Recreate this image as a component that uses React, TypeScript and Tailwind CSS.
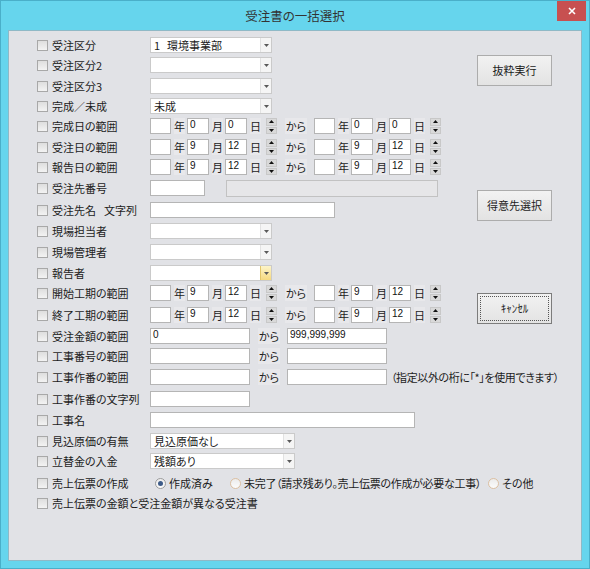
import React from "react";

const jp = "font-['Noto_Sans_CJK_JP','Noto_Sans',sans-serif] [font-feature-settings:'palt']";

function Check() {
  return (
    <span className="block w-[11px] h-[11px] shrink-0 border border-[#a8a8a8] bg-linear-to-b from-[#dedede] to-[#f3f3f3]" />
  );
}

type RowProps = { h: string; label: React.ReactNode; children?: React.ReactNode };

function Row({ h, label, children }: RowProps) {
  return (
    <div className={`flex items-start ${h}`}>
      <div className="flex items-center h-[16px] w-[113px] shrink-0">
        <Check />
        <span className="ml-[4px] whitespace-nowrap">{label}</span>
      </div>
      <div className="flex items-center h-[16px]">{children}</div>
    </div>
  );
}

function Box({ w, children, className = "" }: { w: string; children?: React.ReactNode; className?: string }) {
  return (
    <div
      className={`${w} h-[16px] shrink-0 bg-white border border-[#b5b5b5] pl-[2px] text-[10px] leading-[12px] font-['Liberation_Sans',sans-serif] text-[#111] ${className}`}
    >
      {children}
    </div>
  );
}

function Combo({ w, text, hot }: { w: string; text?: React.ReactNode; hot?: boolean }) {
  return (
    <div className={`${w} h-[16px] flex bg-white border border-[#cacaca]`}>
      <div className="flex-1 pl-[3px] leading-[14px] whitespace-nowrap overflow-hidden">{text}</div>
      <div
        className={`w-[11px] flex items-center justify-center border-l ${
          hot ? "border-[#e3c66a] bg-linear-to-b from-[#fdf4c8] to-[#f6d97f]" : "border-[#e2e2e2] bg-[#f5f5f5]"
        }`}
      >
        <svg width="5" height="3" viewBox="0 0 5 3">
          <path d="M0 0h5L2.5 3z" fill="#5a5a5a" />
        </svg>
      </div>
    </div>
  );
}

function Spin() {
  return (
    <div className="w-[11px] h-[16px] flex flex-col gap-px">
      <div className="flex-1 flex items-center justify-center bg-[#d9d9d9] border border-[#c8c8c8]">
        <svg width="5" height="3" viewBox="0 0 5 3">
          <path d="M0 3h5L2.5 0z" fill="#111" />
        </svg>
      </div>
      <div className="flex-1 flex items-center justify-center bg-[#d9d9d9] border border-[#c8c8c8]">
        <svg width="5" height="3" viewBox="0 0 5 3">
          <path d="M0 0h5L2.5 3z" fill="#111" />
        </svg>
      </div>
    </div>
  );
}

function Unit({ children }: { children: React.ReactNode }) {
  return (
    <span className="w-[12px] h-[16px] leading-[16px] text-center bg-[#e8e8eb] shrink-0">{children}</span>
  );
}

function Kara({ className = "" }: { className?: string }) {
  return (
    <span
      className={`w-[22px] h-[16px] leading-[16px] text-center whitespace-nowrap bg-[#e8e8eb] shrink-0 ${className}`}
    >
      から
    </span>
  );
}

function DateGroup({ m, d }: { m?: string; d?: string }) {
  return (
    <div className="flex items-center">
      <Box w="w-[21px]" />
      <span className="ml-[3px]">
        <Unit>年</Unit>
      </span>
      <Box w="w-[22px]" className="ml-[2px]">
        {m}
      </Box>
      <span className="ml-[3px]">
        <Unit>月</Unit>
      </span>
      <Box w="w-[22px]" className="ml-[2px]">
        {d}
      </Box>
      <span className="ml-[3px]">
        <Unit>日</Unit>
      </span>
      <div className="ml-[5px]">
        <Spin />
      </div>
    </div>
  );
}

function DateRange({ m, d }: { m: string; d: string }) {
  return (
    <div className="flex items-center">
      <DateGroup m={m} d={d} />
      <Kara className="ml-[8px]" />
      <div className="ml-[7px]">
        <DateGroup m={m} d={d} />
      </div>
    </div>
  );
}

function Radio({ on }: { on?: boolean }) {
  return (
    <span
      className={`w-[11px] h-[11px] shrink-0 rounded-full border flex items-center justify-center bg-linear-to-b from-[#ececec] to-[#fbfbfb] ${
        on ? "border-[#9c9c9c]" : "border-[#dcc0a2]"
      }`}
    >
      {on && <span className="w-[5px] h-[5px] rounded-full bg-[#3d5b88]" />}
    </span>
  );
}

function Btn({ children, focus }: { children: React.ReactNode; focus?: boolean }) {
  return (
    <div
      className={`w-[75px] h-[31px] flex items-center justify-center border bg-linear-to-b from-[#f2f2f2] to-[#e3e3e3] ${
        focus ? "border-[#7c7c7c] p-[2px]" : "border-[#acacac]"
      }`}
    >
      {focus ? (
        <div className="w-full h-full flex items-center justify-center border border-dotted border-[#555]">{children}</div>
      ) : (
        children
      )}
    </div>
  );
}

export default function App() {
  return (
    <div className={`w-[590px] h-[569px] flex flex-col bg-[#66d5ed] border border-[#4aafc9] text-[11px] text-[#1c1c1c] ${jp}`}>
      <div className="relative h-[29px] shrink-0 flex items-center justify-center">
        <span className="text-[12.5px] text-[#333] pt-[2px]">受注書の一括選択</span>
        <div className="absolute top-0 right-[3px] w-[29px] h-[20px] bg-[#c75050] flex items-center justify-center">
          <svg width="8" height="8" viewBox="0 0 8 8">
            <path d="M1 1l6 6M7 1L1 7" stroke="#fff" strokeWidth="1.6" />
          </svg>
        </div>
      </div>

      <div className="flex-1 mx-[7px] mb-[7px] border border-[#8fb9c6] bg-[#e1e2e6] flex">
        <div className="w-[468px] shrink-0 pl-[28px] pt-[6px] flex flex-col">
          <Row h="h-[20px]" label="受注区分">
            <Combo
              w="w-[122px]"
              text={
                <>
                  1<span className="ml-[7px]">環境事業部</span>
                </>
              }
            />
          </Row>
          <Row h="h-[21px]" label="受注区分2">
            <Combo w="w-[122px]" />
          </Row>
          <Row h="h-[20px]" label="受注区分3">
            <Combo w="w-[122px]" />
          </Row>
          <Row h="h-[20px]" label="完成／未成">
            <Combo w="w-[122px]" text="未成" />
          </Row>
          <Row h="h-[21px]" label="完成日の範囲">
            <DateRange m="0" d="0" />
          </Row>
          <Row h="h-[20px]" label="受注日の範囲">
            <DateRange m="9" d="12" />
          </Row>
          <Row h="h-[21px]" label="報告日の範囲">
            <DateRange m="9" d="12" />
          </Row>
          <Row h="h-[22px]" label="受注先番号">
            <Box w="w-[55px]" />
            <div className="ml-[21px] w-[212px] h-[17px] bg-[#e6e6e8] border border-[#c2c2c2] self-start" />
          </Row>
          <Row
            h="h-[21px]"
            label={
              <>
                受注先名<span className="ml-[8px]">文字列</span>
              </>
            }
          >
            <Box w="w-[185px]" />
          </Row>
          <Row h="h-[21px]" label="現場担当者">
            <Combo w="w-[122px]" />
          </Row>
          <Row h="h-[21px]" label="現場管理者">
            <Combo w="w-[122px]" />
          </Row>
          <Row h="h-[20px]" label="報告者">
            <Combo w="w-[122px]" hot />
          </Row>
          <Row h="h-[22px]" label="開始工期の範囲">
            <DateRange m="9" d="12" />
          </Row>
          <Row h="h-[21px]" label="終了工期の範囲">
            <DateRange m="9" d="12" />
          </Row>
          <Row h="h-[20px]" label="受注金額の範囲">
            <Box w="w-[100px]">0</Box>
            <Kara className="ml-[8px]" />
            <Box w="w-[100px]" className="ml-[7px]">
              999,999,999
            </Box>
          </Row>
          <Row h="h-[21px]" label="工事番号の範囲">
            <Box w="w-[100px]" />
            <Kara className="ml-[8px]" />
            <Box w="w-[100px]" className="ml-[7px]" />
          </Row>
          <Row h="h-[22px]" label="工事作番の範囲">
            <Box w="w-[100px]" />
            <Kara className="ml-[8px]" />
            <Box w="w-[100px]" className="ml-[7px]" />
            <span className="ml-[4px] whitespace-nowrap tracking-[-0.4px]">（指定以外の桁に「*」を使用できます）</span>
          </Row>
          <Row h="h-[21px]" label="工事作番の文字列">
            <Box w="w-[100px]" />
          </Row>
          <Row h="h-[21px]" label="工事名">
            <Box w="w-[265px]" />
          </Row>
          <Row h="h-[20px]" label="見込原価の有無">
            <Combo w="w-[145px]" text="見込原価なし" />
          </Row>
          <Row h="h-[22px]" label="立替金の入金">
            <Combo w="w-[145px]" text="残額あり" />
          </Row>
          <Row h="h-[20px]" label="売上伝票の作成">
            <div className="ml-[5px] w-[75px] flex items-center">
              <Radio on />
              <span className="ml-[3px] whitespace-nowrap">作成済み</span>
            </div>
            <div className="w-[258px] flex items-center">
              <Radio />
              <span className="ml-[3px] whitespace-nowrap tracking-[-0.3px]">
                未完了（請求残あり。売上伝票の作成が必要な工事）
              </span>
            </div>
            <div className="flex items-center">
              <Radio />
              <span className="ml-[3px] whitespace-nowrap">その他</span>
            </div>
          </Row>
          <div className="flex items-center h-[16px]">
            <Check />
            <span className="ml-[4px] whitespace-nowrap">売上伝票の金額と受注金額が異なる受注書</span>
          </div>
        </div>

        <div className="pt-[24px] flex flex-col">
          <Btn>抜粋実行</Btn>
          <div className="mt-[104px]">
            <Btn>得意先選択</Btn>
          </div>
          <div className="mt-[72px]">
            <Btn focus>ｷｬﾝｾﾙ</Btn>
          </div>
        </div>
      </div>
    </div>
  );
}
